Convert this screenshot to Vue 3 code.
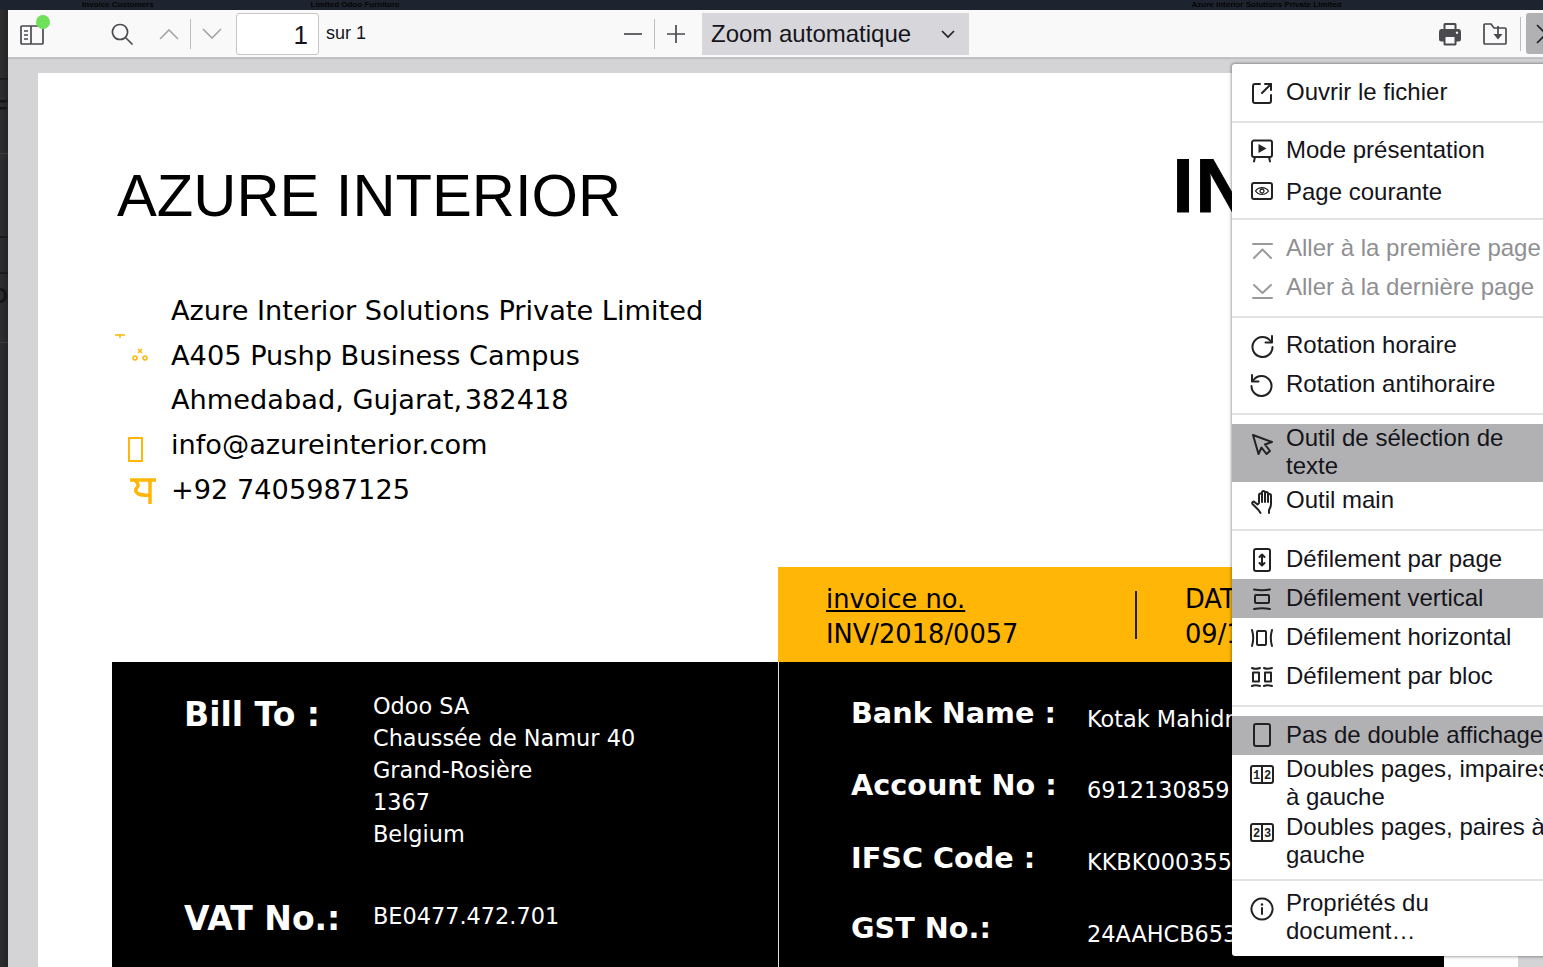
<script setup>
const I = {
  open: { s: ['M10 4H5a2 2 0 0 0-2 2v15a2 2 0 0 0 2 2h14a2 2 0 0 0 2-2v-6', 'M12 13 21 4', 'M15 4h6v6'] },
  present: { s: ['M4 2.500h16a2 2 0 0 1 2 2V17a2 2 0 0 1-2 2H4a2 2 0 0 1-2-2V4.500a2 2 0 0 1 2-2z', 'M5 19l-1 4.500', 'M19 19l1 4.500'], f: ['M8.500 6v9l8-4.500z'] },
  page: { s: ['M4 3h16a2 2 0 0 1 2 2v12a2 2 0 0 1-2 2H4a2 2 0 0 1-2-2V5a2 2 0 0 1 2-2z'], thin: ['M5.500 11c3-4.500 10-4.500 13 0c-3 4.500-10 4.500-13 0z', 'M12 9a2 2 0 1 0 .01 0z'] },
  first: { s: ['M3 8h19', 'M4 22l8.500-8.500 8.500 8.500'], gray: true },
  last: { s: ['M4 10l8.500 8 8.500-8', 'M3 23h19'], gray: true },
  cw: { s: ['M20.500 8A10 10 0 1 0 22.500 14', 'M22 3v6.500h-6.500'] },
  ccw: { s: ['M3.500 8A10 10 0 1 1 1.500 14', 'M2 3v6.500h6.500'] },
  select: { s: ['M3 4l19 7-7 2.500 5 6.500-3.500 3-5-6.500-3 6.500z'] },
  hand: { s: ['M9 13V6c0-2 3-2 3 0V3.500c0-2 3-2 3 0v1c0-2 3-2 3 0v2c0-2 3-2 3 0V15c0 3-1 4-2 6v3', 'M9 14l-1.500 1.500-3-2.500c-1-1-3 .5-2 2l6 6 2 3', 'M12 6v7', 'M15 4v9', 'M18 6v7'] },
  scrollPage: { s: ['M6 2h12a2 2 0 0 1 2 2v18a2 2 0 0 1-2 2H6a2 2 0 0 1-2-2V4a2 2 0 0 1 2-2z', 'M12 8v10', 'M9.500 10 12 7.500 14.500 10', 'M9.500 16l2.500 2.500 2.500-2.500'] },
  vertical: { s: ['M4 3.500c5 1 11 1 16 0', 'M6 9h12a1 1 0 0 1 1 1v6a1 1 0 0 1-1 1H6a1 1 0 0 1-1-1v-6a1 1 0 0 1 1-1z', 'M4 23c5-1 11-1 16 0'] },
  horizontal: { s: ['M2 5c1.500 5 1.500 11 0 16', 'M8 6h7a1 1 0 0 1 1 1v12a1 1 0 0 1-1 1H8a1 1 0 0 1-1-1V7a1 1 0 0 1 1-1z', 'M22 5c-1.500 5-1.500 11 0 16'] },
  wrap: { s: ['M2 4c2 1 5 1 8 0', 'M3 8.500h6v9H3z', 'M2 22c2-1 5-1 8 0', 'M14 4c2 1 5 1 8 0', 'M15 8.500h6v9h-6z', 'M14 22c2-1 5-1 8 0'] },
  single: { s: ['M6 1h12a2 2 0 0 1 2 2v18a2 2 0 0 1-2 2H6a2 2 0 0 1-2-2V3a2 2 0 0 1 2-2z'] },
  odd: { s: ['M3 4h18a2 2 0 0 1 2 2v13a2 2 0 0 1-2 2H3a2 2 0 0 1-2-2V6a2 2 0 0 1 2-2z', 'M12 4v17'], t: ['1', '2'] },
  even: { s: ['M3 4h18a2 2 0 0 1 2 2v13a2 2 0 0 1-2 2H3a2 2 0 0 1-2-2V6a2 2 0 0 1 2-2z', 'M12 4v17'], t: ['2', '3'] },
  info: { s: ['M12 2.500a10.500 10.500 0 1 0 .01 0z', 'M12 12v6'], f: ['M10.700 8.500a1.300 1.300 0 1 0 2.600 0a1.300 1.300 0 1 0-2.600 0z'] },
}

const groups = [
  { cls: 'g-open', items: [{ icon: 'open', label: 'Ouvrir le fichier' }] },
  { cls: 'g-view', items: [{ icon: 'present', label: 'Mode présentation' }, { icon: 'page', label: 'Page courante' }] },
  { cls: 'g-nav', items: [{ icon: 'first', label: 'Aller à la première page', off: true }, { icon: 'last', label: 'Aller à la dernière page', off: true }] },
  { cls: 'g-rot', items: [{ icon: 'cw', label: 'Rotation horaire' }, { icon: 'ccw', label: 'Rotation antihoraire' }] },
  { cls: 'g-tool', items: [{ icon: 'select', label: 'Outil de sélection de texte', on: true }, { icon: 'hand', label: 'Outil main' }] },
  { cls: 'g-scroll', items: [{ icon: 'scrollPage', label: 'Défilement par page' }, { icon: 'vertical', label: 'Défilement vertical', on: true }, { icon: 'horizontal', label: 'Défilement horizontal' }, { icon: 'wrap', label: 'Défilement par bloc' }] },
  { cls: 'g-spread', items: [{ icon: 'single', label: 'Pas de double affichage', on: true }, { icon: 'odd', label: 'Doubles pages, impaires à gauche' }, { icon: 'even', label: 'Doubles pages, paires à gauche' }] },
  { cls: 'g-props', items: [{ icon: 'info', label: 'Propriétés du document…' }] },
]

const address = ['Azure Interior Solutions Private Limited', 'A405 Pushp Business Campus', 'Ahmedabad, Gujarat,\u200A382418', 'info@azureinterior.com', '+92 7405987125']
const billLines = ['Odoo SA', 'Chaussée de Namur 40', 'Grand-Rosière', '1367', 'Belgium']
const bank = [
  ['Bank Name :', 'Kotak Mahidra Bank'],
  ['Account No :', '6912130859'],
  ['IFSC Code :', 'KKBK0003555'],
  ['GST No.:', '24AAHCB6533'],
]
</script>

<template>
  <div class="screen">
    <div class="backdrop">
      <span class="bt b1">Invoice Customers</span>
      <span class="bt b2">Limited Odoo Furniture</span>
      <span class="bt b3">Azure Interior Solutions Private Limited</span>
    </div>
    <div class="body">
      <div class="edge">
        <span class="e1">F</span>
        <span class="e2">D</span>
      </div>
      <div class="viewer">
        <div class="toolbar">
          <span class="tb sidebar">
            <svg viewBox="0 0 24 20" width="24" height="20" class="ic">
              <path d="M2 1h20a1 1 0 0 1 1 1v16a1 1 0 0 1-1 1H2a1 1 0 0 1-1-1V2a1 1 0 0 1 1-1z" />
              <path d="M11 1v18M4 6h4M4 10h4M4 14h4" />
            </svg>
            <i class="dot"></i>
          </span>
          <span class="tb search">
            <svg viewBox="0 0 24 24" width="24" height="24" class="ic">
              <path d="M10 2.500a7.500 7.500 0 1 0 .01 0zM15.500 15.500l7 7" />
            </svg>
          </span>
          <span class="tb up">
            <svg viewBox="0 0 20 12" width="20" height="12" class="ic gray"><path d="M1 11l9-9 9 9" /></svg>
          </span>
          <i class="vsep s1"></i>
          <span class="tb down">
            <svg viewBox="0 0 20 12" width="20" height="12" class="ic gray"><path d="M1 1l9 9 9-9" /></svg>
          </span>
          <div class="pagebox">1</div>
          <span class="sur">sur 1</span>
          <span class="tb minus"><svg viewBox="0 0 20 20" width="20" height="20" class="ic"><path d="M1 10h18" /></svg></span>
          <i class="vsep s2"></i>
          <span class="tb plus"><svg viewBox="0 0 20 20" width="20" height="20" class="ic"><path d="M1 10h18M10 1v18" /></svg></span>
          <div class="zoom">
            <span>Zoom automatique</span>
            <svg viewBox="0 0 14 8" width="14" height="8" class="ic dark"><path d="M1 1l6 6 6-6" /></svg>
          </div>
          <span class="tb print">
            <svg viewBox="0 0 24 24" width="24" height="24">
              <path fill="#4a4a4f" fill-rule="evenodd" d="M7 1h10a1.500 1.500 0 0 1 1.500 1.500V7H21a3 3 0 0 1 2 3v7a2.500 2.500 0 0 1-2.500 2.500h-2V22a1.500 1.500 0 0 1-1.500 1.500H7A1.500 1.500 0 0 1 5.500 22v-2.500h-2A2.500 2.500 0 0 1 1 17v-7a3 3 0 0 1 2-3h2.500V2.500A1.500 1.500 0 0 1 7 1zm.500 2v4h9V3zm0 12v6.500h9V15zM19 9.500a1.200 1.200 0 1 0 .01 0z" />
            </svg>
          </span>
          <span class="tb save">
            <svg viewBox="0 0 24 22" width="24" height="22" class="ic">
              <path d="M2 1h6l3 4h11a1 1 0 0 1 1 1v14a1 1 0 0 1-1 1H2a1 1 0 0 1-1-1V2a1 1 0 0 1 1-1z" />
              <path d="M15 3v11" />
              <path class="solid" d="M10.500 11h9L15 16.500z" />
            </svg>
          </span>
          <i class="vsep s3"></i>
          <div class="closebtn">
            <svg viewBox="0 0 10 20" width="10" height="20" class="ic dark"><path d="M1 1l9 9-9 9" /></svg>
          </div>
        </div>

        <div class="stage">
          <div class="sheet">
            <header class="head">
              <h1 class="company">AZURE INTERIOR</h1>
              <div class="doc-title">INVOICE</div>
            </header>

            <div class="address">
              <div v-for="(line, i) in address" :key="line" class="addr-row">
                <span class="addr-icon">
                  <svg v-if="i === 1" viewBox="0 0 54 45" width="54" height="45" class="glyph">
                    <path d="M-2 2h10M3 2v3" />
                    <circle cx="18" cy="25" r="2" />
                    <circle cx="28" cy="25" r="2" />
                    <path d="M21 16l4 4M25 16l-4 4" />
                  </svg>
                  <i v-else-if="i === 3" class="tofu"></i>
                  <svg v-else-if="i === 4" viewBox="0 0 28 28" width="28" height="28" class="glyph thick">
                    <path d="M1 2h26M6 2c4 4 4 6 1 9c-1 4 3 7 14 6M21 2v24" />
                  </svg>
                </span>
                <span>{{ line }}</span>
              </div>
            </div>

            <div class="band">
              <div class="band-cell">
                <div class="u">invoice no.</div>
                <div>INV/2018/0057</div>
              </div>
              <i class="band-sep"></i>
              <div class="band-cell date">
                <div>DATE</div>
                <div>09/12/2018</div>
              </div>
            </div>

            <div class="panel">
              <div class="panel-left">
                <div class="bill">
                  <div class="plabel">Bill To :</div>
                  <div class="pvalue lines">
                    <div v-for="l in billLines" :key="l">{{ l }}</div>
                  </div>
                </div>
                <div class="vat">
                  <div class="plabel">VAT No.:</div>
                  <div class="pvalue">BE0477.472.701</div>
                </div>
              </div>
              <div class="panel-right">
                <div v-for="b in bank" :key="b[0]" class="bank-row">
                  <div class="plabel">{{ b[0] }}</div>
                  <div class="pvalue bankv">{{ b[1] }}</div>
                </div>
              </div>
            </div>
          </div>
        </div>
      </div>
    </div>

    <nav class="menu">
      <div v-for="g in groups" :key="g.cls" class="group" :class="g.cls">
        <div v-for="it in g.items" :key="it.label" class="row" :class="{ on: it.on, off: it.off }">
          <svg viewBox="0 0 24 24" width="24" height="24" class="mi" :class="{ gray: I[it.icon].gray }">
            <path v-for="d in I[it.icon].s" :key="d" :d="d" />
            <path v-for="d in I[it.icon].thin || []" :key="d" :d="d" class="thin" />
            <path v-for="d in I[it.icon].f || []" :key="d" :d="d" class="solid" />
            <template v-if="I[it.icon].t">
              <text x="6.500" y="17" class="digit">{{ I[it.icon].t[0] }}</text>
              <text x="17.500" y="17" class="digit">{{ I[it.icon].t[1] }}</text>
            </template>
          </svg>
          <span class="label">{{ it.label }}</span>
        </div>
      </div>
    </nav>
  </div>
</template>

<style>
html, body { margin: 0; overflow: hidden; background: #1c212b; }
</style>

<style scoped>
.screen {
  position: relative;
  width: 1543px;
  height: 967px;
  overflow: hidden;
  display: flex;
  flex-direction: column;
  font-family: "Liberation Sans", Arial, sans-serif;
  color: #15141a;
}
.backdrop {
  height: 10px;
  flex: none;
  background: #1d2430;
  display: flex;
  align-items: flex-start;
  overflow: hidden;
  font-size: 8px;
  line-height: 10px;
  color: #050505;
  font-weight: bold;
}
.bt { white-space: nowrap; }
.b1 { margin-left: 82px; }
.b2 { margin-left: 157px; }
.b3 { margin-left: 792px; }
.body { flex: 1; min-height: 0; display: flex; }
.edge {
  width: 8px;
  flex: none;
  position: relative;
  overflow: hidden;
  background:
    linear-gradient(#1b1b1d, #1b1b1d) 0 68px / 100% 2px no-repeat,
    linear-gradient(#3a3a3c, #3a3a3c) 0 143px / 100% 1px no-repeat,
    linear-gradient(#1b1b1d, #1b1b1d) 0 226px / 100% 2px no-repeat,
    linear-gradient(#1b1b1d, #1b1b1d) 0 262px / 100% 2px no-repeat,
    linear-gradient(#3a3a3c, #3a3a3c) 0 332px / 100% 1px no-repeat,
    linear-gradient(90deg, #2e2e30, #252526);
}
.edge span { position: absolute; right: 0; font: 700 22px/24px "Liberation Sans", Arial, sans-serif; color: #141418; }
.e1 { top: 86px; }
.e2 { top: 274px; }
.viewer { flex: 1; min-width: 0; display: flex; flex-direction: column; background: #d4d4d7; }

.toolbar {
  height: 48px;
  flex: none;
  box-sizing: border-box;
  background: #f9f9fa;
  border-bottom: 1px solid #c4c4c6;
  box-shadow: 0 1px 1px rgba(0, 0, 0, .1);
  display: flex;
  align-items: center;
  position: relative;
  z-index: 1;
}
.tb { display: inline-flex; align-items: center; justify-content: center; position: relative; flex: none; }
.ic { fill: none; stroke: #4a4a4f; stroke-width: 1.700; overflow: visible; }
.ic.gray { stroke: #a8a8ab; }
.ic.dark { stroke: #222; }
.solid { fill: #222; stroke: none; }
.ic .solid { fill: #4a4a4f; }
.sidebar { margin-left: 12px; margin-top: 2px; }
.dot {
  position: absolute;
  width: 14px;
  height: 14px;
  border-radius: 50%;
  background: #6ee05a;
  right: -6px;
  top: -10px;
}
.search { margin-left: 66px; }
.up { margin-left: 25px; }
.vsep { width: 1px; height: 30px; background: #bdbdbf; flex: none; }
.s1 { margin-left: 11px; }
.down { margin-left: 11px; }
.pagebox {
  margin-left: 14px;
  width: 83px;
  height: 42px;
  box-sizing: border-box;
  background: #fff;
  border: 1px solid #c6c6c8;
  border-radius: 3px;
  font-size: 26px;
  line-height: 42px;
  text-align: right;
  padding-right: 10px;
  flex: none;
}
.sur { margin-left: 7px; font-size: 18px; width: 297px; flex: none; margin-top: -1px; }
.s2 { margin-left: 11px; }
.plus { margin-left: 11px; }
.zoom {
  margin-left: 16px;
  width: 267px;
  height: 42px;
  flex: none;
  box-sizing: border-box;
  padding: 0 14px 0 9px;
  background: #d7d7db;
  display: flex;
  align-items: center;
  justify-content: space-between;
  font-size: 24px;
}
.print { margin-left: 469px; margin-top: 1px; }
.save { margin-left: 21px; margin-top: 1px; }
.s3 { margin-left: 13px; height: 34px; }
.closebtn {
  margin-left: 5px;
  width: 30px;
  flex: none;
  height: 41px;
  border-radius: 3px;
  background: #b1b1b3;
  display: flex;
  align-items: center;
  padding-left: 10px;
  box-sizing: border-box;
}

.stage { flex: 1; min-height: 0; overflow: hidden; padding: 15px 25px 0 30px; }
.sheet {
  background: #fff;
  height: 100%;
  box-sizing: border-box;
  padding-top: 87px;
  color: #000;
  font-family: "DejaVu Sans", sans-serif;
}
.head { display: flex; justify-content: space-between; padding: 0 0 0 79px; height: 70px; }
.company {
  margin: 0;
  font: 400 59.700px/72px "Liberation Sans", Arial, sans-serif;
  white-space: nowrap;
}
.doc-title {
  font: 700 76px/70px "Liberation Sans", Arial, sans-serif;
  -webkit-text-stroke: 1px #000;
  letter-spacing: 2px;
  margin-top: -9px;
  margin-right: 19px;
}
.address { margin-top: 58px; padding-left: 79px; }
.addr-row { height: 44.750px; display: flex; align-items: center; font-size: 27.200px; white-space: nowrap; }
.addr-icon { width: 54px; height: 44px; flex: none; position: relative; display: block; }
.glyph { position: absolute; left: 0; top: 0; fill: none; stroke: #ffb606; stroke-width: 1.500; overflow: visible; }
.thick { left: 12px; top: 11px; stroke-width: 3.500; }
.tofu {
  position: absolute;
  left: 11px;
  top: 14px;
  width: 11px;
  height: 21px;
  border: 2px solid #ffb606;
}
.band {
  margin: 55px 0 0 740px;
  height: 95px;
  background: #ffb606;
  display: flex;
  align-items: center;
  font-size: 25.700px;
  line-height: 35px;
  box-sizing: border-box;
  padding: 5px 0 0 48px;
  white-space: nowrap;
}
.band-cell { width: 309px; flex: none; }
.u { text-decoration: underline; }
.band-sep { width: 2px; height: 48px; background: #222; flex: none; margin-top: -3px; }
.date { margin-left: 48px; }
.panel {
  margin-left: 74px;
  width: 1332px;
  height: 305px;
  background: #000;
  color: #fff;
  display: flex;
}
.panel-left { width: 666px; flex: none; box-sizing: border-box; padding: 28px 0 0 72px; }
.panel-right { flex: 1; border-left: 1px solid #e0e0e0; padding: 31px 0 0 72px; }
.bill, .vat { display: flex; }
.plabel { width: 189px; flex: none; font-size: 33px; font-weight: 700; line-height: 40px; white-space: nowrap; }
.bill .plabel { margin-top: 5px; }
.pvalue { font-size: 22.400px; line-height: 32px; white-space: nowrap; }
.vat { margin-top: 49px; }
.vat .pvalue { margin-top: 1px; }
.bank-row { display: flex; height: 71.700px; }
.bank-row .plabel { width: 236px; font-size: 28.700px; }
.bank-row:nth-child(2) .plabel { margin-top: 1px; }
.bank-row:nth-child(3) .plabel { margin-top: 2px; }
.bankv { margin-top: 10px; }

.menu {
  position: absolute;
  left: 1232px;
  top: 64px;
  width: 340px;
  height: 892px;
  box-sizing: border-box;
  background: #fff;
  border-radius: 3px;
  box-shadow: 0 0 3px 1px rgba(0, 0, 0, .35);
  padding-top: 9px;
  font-size: 24px;
  line-height: 28px;
  color: #15141a;
}
.group { border-bottom: 2px solid #e2e2e3; }
.group:last-child { border-bottom: 0; }
.g-open { padding-bottom: 9px; }
.g-view { padding: 8px 0 6px; }
.g-nav { padding: 9px 0 9px; }
.g-rot { padding: 8px 0 9px; }
.g-tool { padding: 9px 0 8px; }
.g-scroll { padding: 9px 0 9px; }
.g-spread { padding: 9px 0 8px; }
.g-props { padding-top: 8px; }
.g-view .row + .row { margin-top: 3px; }
.row { display: flex; min-height: 39px; align-items: flex-start; padding-left: 18px; }
.row.on { background: #b1b1b3; }
.row.off { color: #8f8f93; }
.mi {
  flex: none;
  margin-top: 7px;
  fill: none;
  stroke: #222;
  stroke-width: 2;
  stroke-linejoin: round;
  stroke-linecap: round;
  overflow: visible;
}
.mi.gray { stroke: #9a9a9d; }
.thin { stroke-width: 1.300; }
.digit { font: 700 12px "Liberation Mono", monospace; fill: #222; stroke: none; text-anchor: middle; }
.label { margin-left: 12px; width: 272px; padding: 5px 0 6px; display: block; }
.g-tool .row:first-child .label,
.g-spread .row:not(:first-child) .label,
.g-props .label { padding: 0 0 2px; }
.g-tool .row:last-child .label { padding: 4px 0 7px; }
</style>
